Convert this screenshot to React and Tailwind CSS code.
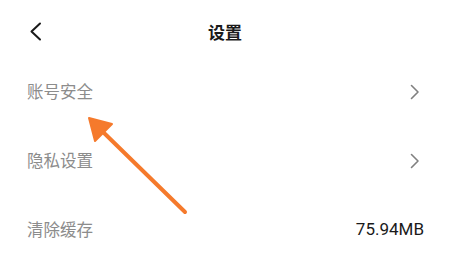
import React from 'react';

export default function App() {
    const rows = [
        { label: "账号安全", arrow: true },
        { label: "隐私设置", arrow: true },
        { label: "清除缓存", value: "75.94MB" }
    ];

    return (
        <div
            className="relative w-[450px] h-[271px] bg-white overflow-hidden"
            style={{ fontFamily: '"Noto Sans CJK SC", "Noto Sans", sans-serif' }}
        >
            <header className="relative flex items-center justify-center h-[57px] pt-[6px]">
                <svg className="absolute left-[28px] top-[22px]" width="16" height="19" viewBox="0 0 16 19">
                    <path d="M12 1.5 L3.5 9.5 L12 17.5" fill="none" stroke="#1a1a1a" strokeWidth="2" strokeLinecap="round" strokeLinejoin="round" />
                </svg>
                <h1 className="text-[17px] font-semibold text-[#1a1a1a]">设置</h1>
            </header>

            <div className="flex flex-col">
                {rows.map((row, index) => (
                    <div key={index} className="flex items-center justify-between pl-[27px] pr-[26px] h-[69px]">
                        <span className="text-[16.5px] text-[#8c8c8c]">{row.label}</span>
                        {row.arrow ? (
                            <svg width="10" height="16" viewBox="0 0 10 16" className="mr-[4px]">
                                <path d="M1.5 1.5 L8 8 L1.5 14.5" fill="none" stroke="#808080" strokeWidth="1.6" strokeLinecap="round" strokeLinejoin="round" />
                            </svg>
                        ) : (
                            <span className="text-[17px] text-[#1a1a1a]" style={{ fontFamily: 'Roboto, "Noto Sans", sans-serif' }}>{row.value}</span>
                        )}
                    </div>
                ))}
            </div>

            <svg className="absolute left-0 top-0 pointer-events-none" width="450" height="271" viewBox="0 0 450 271">
                <line x1="185" y1="212" x2="102" y2="131" stroke="#f57a2c" strokeWidth="4" strokeLinecap="round" />
                <polygon points="89,118 112,124 95,141" fill="#f57a2c" stroke="#f57a2c" strokeWidth="2" strokeLinejoin="round" />
            </svg>
        </div>
    );
}
